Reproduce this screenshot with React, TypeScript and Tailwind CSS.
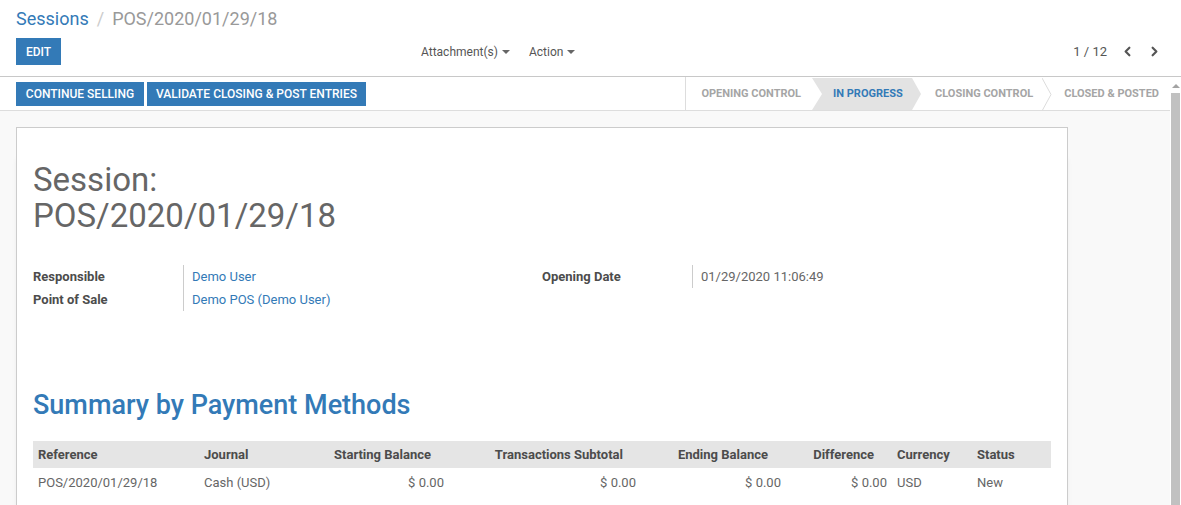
import { ChevronLeft, ChevronRight } from "lucide-react";

const columns = [
  { label: "Reference", w: "w-[166px]", num: false },
  { label: "Journal", w: "w-[131px]", num: false },
  { label: "Starting Balance", w: "w-[119px]", num: true },
  { label: "Transactions Subtotal", w: "w-[192px]", num: true },
  { label: "Ending Balance", w: "w-[145px]", num: true },
  { label: "Difference", w: "w-[106px]", num: true },
  { label: "Currency", w: "w-[80px]", num: false },
  { label: "Status", w: "w-[79px]", num: false },
];

const row = ["POS/2020/01/29/18", "Cash (USD)", "$ 0.00", "$ 0.00", "$ 0.00", "$ 0.00", "USD", "New"];

function Caret() {
  return (
    <span className="ml-[4px] inline-block h-0 w-0 border-x-[4px] border-t-[4px] border-x-transparent border-t-[#666] align-middle" />
  );
}

function Separator() {
  return (
    <svg width="10" height="33" viewBox="0 0 10 33" className="shrink-0">
      <polyline points="0,0 9,16.5 0,33" fill="none" stroke="#dcdcdc" strokeWidth="1" />
    </svg>
  );
}

function FieldRow({ label, value, link }: { label: string; value: string; link?: boolean }) {
  return (
    <div className="flex h-[23px]">
      <div className="flex w-[150px] items-center font-bold text-[#4c4c4c]">{label}</div>
      <div className={`flex items-center border-l border-[#ccc] pl-[8px] ${link ? "text-[#337ab7]" : "text-[#666]"}`}>
        {value}
      </div>
    </div>
  );
}

export default function App() {
  return (
    <div className="flex h-screen flex-col overflow-hidden bg-white font-[Roboto,sans-serif] text-[13px] text-[#666]">
      {/* ── Control panel ─────────────────────────────── */}
      <div className="shrink-0 border-b border-[#c8c8c8] px-4">
        <div className="flex h-[38px] items-center pb-[1px] text-[18px]">
          <span className="text-[#337ab7]">Sessions</span>
          <span className="mx-[8px] text-[#ccc]">/</span>
          <span className="text-[#999]">POS/2020/01/29/18</span>
        </div>
        <div className="flex h-[38px] items-start">
          <div className="w-[405px]">
            <button className="h-[27px] w-[45px] bg-[#337ab7] text-[12px] font-medium uppercase text-white">Edit</button>
          </div>
          <div className="flex h-[27px] items-center gap-[19px] text-[12px] text-[#555]">
            <span className="flex items-center">Attachment(s)<Caret /></span>
            <span className="flex items-center">Action<Caret /></span>
          </div>
          <div className="flex h-[27px] flex-1 items-center justify-end pr-[3px] text-[#555]">
            <span className="text-[13px]">1 / 12</span>
            <ChevronLeft className="ml-[13px]" size={15} strokeWidth={3.5} color="#555" />
            <ChevronRight className="ml-[12px]" size={15} strokeWidth={3.5} color="#555" />
          </div>
        </div>
      </div>

      {/* ── Main area ─────────────────────────────────── */}
      <div className="flex min-h-0 flex-1">
        <div className="flex min-w-0 flex-1 flex-col bg-[#f9f9f9]">
          {/* Status bar */}
          <div className="flex h-[34px] shrink-0 items-center border-b border-[#ddd] bg-white pl-4">
            <div className="flex gap-[3px]">
              <button className="h-[24px] w-[128px] bg-[#337ab7] text-[12px] font-medium uppercase text-white">Continue Selling</button>
              <button className="h-[24px] w-[219px] bg-[#337ab7] text-[12px] font-medium uppercase text-white">Validate Closing &amp; Post Entries</button>
            </div>
            <div className="ml-auto flex h-full items-center border-l border-[#ddd] pt-[1px] text-[11px] font-bold uppercase text-[#a5a5a5]">
              <div className="pl-[15px] pr-[11px]">Opening Control</div>
              <div className="flex h-full w-[109px] items-center bg-[#e3e3e3] pl-[21px] text-[#337ab7] [clip-path:polygon(0_0,calc(100%-9px)_0,100%_50%,calc(100%-9px)_100%,0_100%,10px_50%)]">
                In Progress
              </div>
              <div className="pl-[14px] pr-[9px]">Closing Control</div>
              <Separator />
              <div className="pl-[12px] pr-[11px]">Closed &amp; Posted</div>
            </div>
          </div>

          {/* Sheet */}
          <div className="min-h-0 flex-1 overflow-hidden px-4 pt-[16px]">
            <div className="w-[1052px] border border-[#ccc] bg-white px-[16px] pb-10 pt-[34px] shadow-[0_30px_6px_-2px_rgba(0,0,0,0.1)]">
              <h1 className="text-[33px] leading-[36px] text-[#666]">
                Session:
                <br />
                POS/2020/01/29/18
              </h1>

              <div className="mt-[31px] flex">
                <div className="w-[509px]">
                  <FieldRow label="Responsible" value="Demo User" link />
                  <FieldRow label="Point of Sale" value="Demo POS (Demo User)" link />
                </div>
                <div className="w-[509px]">
                  <FieldRow label="Opening Date" value="01/29/2020 11:06:49" />
                </div>
              </div>

              <h2 className="mt-[78px] text-[27px] font-medium leading-[32px] text-[#337ab7]">Summary by Payment Methods</h2>

              <table className="mt-[20px] w-[1018px] table-fixed border-collapse">
                <thead>
                  <tr className="h-[27px] bg-[#e5e5e5] text-[#4c4c4c]">
                    {columns.map((c) => (
                      <th
                        key={c.label}
                        className={`${c.w} font-bold ${c.num ? "pr-[18px] text-right" : "pl-[5px] text-left"}`}
                      >
                        {c.label}
                      </th>
                    ))}
                  </tr>
                </thead>
                <tbody>
                  <tr className="h-[30px]">
                    {row.map((v, i) => (
                      <td key={i} className={columns[i].num ? "pr-[5px] text-right" : "pl-[5px] text-left"}>
                        {v}
                      </td>
                    ))}
                  </tr>
                </tbody>
              </table>
            </div>
          </div>
        </div>

        {/* Scrollbar */}
        <div className="flex w-[11px] shrink-0 flex-col items-center bg-white">
          <span className="mt-[7px] h-0 w-0 border-x-[4px] border-b-[4px] border-x-transparent border-b-[#a3a3a3]" />
          <div className="mt-[5px] w-[9px] flex-1 bg-[#c1c1c1]" />
        </div>
      </div>
    </div>
  );
}
